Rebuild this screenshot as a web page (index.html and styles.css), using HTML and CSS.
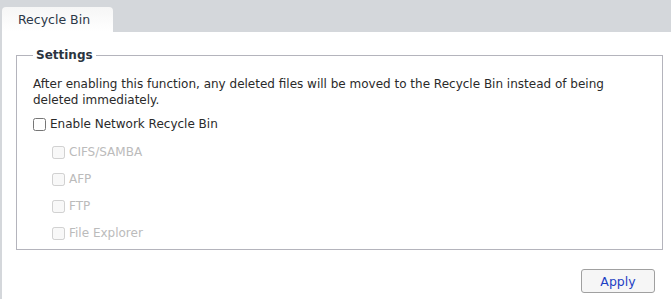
FILE: index.html
```html
<!DOCTYPE html>
<html>
<head>
    <title>Recycle Bin</title>
    <link rel="stylesheet" href="styles.css">
</head>
<body>
    <div class="tabs">
        <div class="tab">Recycle Bin</div>
    </div>
    <div class="panel">
        <fieldset class="settings">
            <legend>Settings</legend>
            <p class="note">After enabling this function, any deleted files will be moved to the Recycle Bin instead of being deleted immediately.</p>
            <label class="check"><input type="checkbox" id="enableBin"> Enable Network Recycle Bin</label>
            <div class="services">
                <label class="check sub"><input type="checkbox" disabled> CIFS/SAMBA</label>
                <label class="check sub"><input type="checkbox" disabled> AFP</label>
                <label class="check sub"><input type="checkbox" disabled> FTP</label>
                <label class="check sub"><input type="checkbox" disabled> File Explorer</label>
            </div>
        </fieldset>
        <div class="actions">
            <button type="button">Apply</button>
        </div>
    </div>
</body>
</html>
```

FILE: styles.css
```css
body {
  margin: 0;
  font-family: "DejaVu Sans", Verdana, sans-serif;
  font-size: 12px;
  color: #2a2a2a;
  background: #fff;
}
.tabs {
  height: 32px;
  background-color: #d4d7db;
  padding-left: 2px;
  display: flex;
  align-items: flex-end;
}
.tab {
  width: 111px;
  height: 25px;
  box-sizing: border-box;
  padding: 5px 0 0 16px;
  background: linear-gradient(#f6f6f6, #fff);
  border-radius: 4px 4px 0 0;
  color: #2b3848;
  font-size: 12.5px;
}
.panel {
  border-left: 2px solid #d4d7db;
  padding: 16px 8px 0 14px;
  height: 251px;
}
.settings {
  margin: 0;
  border: 1px solid #b4b4bc;
  padding: 0 16px;
  height: 200px;
}
.settings legend {
  font-weight: bold;
  font-size: 12px;
  padding: 0 3px;
  color: #2b3440;
}
.note {
  margin: 14px 0 8px 0;
  line-height: 16px;
}
.check {
  display: flex;
  align-items: center;
  height: 16px;
}
.check input {
  width: 13px;
  height: 13px;
  margin: 0 4px 0 0;
}
.services {
  padding-left: 19px;
  padding-top: 1px;
}
.sub {
  color: #bbb;
  margin-top: 11px;
}
.actions {
  display: flex;
  justify-content: flex-end;
  padding-top: 19px;
  padding-right: 8px;
}
button {
  width: 74px;
  height: 24px;
  border: 1px solid #a0a0a0;
  border-radius: 3px;
  background: #f6f6f6;
  color: #1d3fc4;
  font-family: "DejaVu Sans", Verdana, sans-serif;
  font-size: 12.5px;
  cursor: pointer;
}
```
